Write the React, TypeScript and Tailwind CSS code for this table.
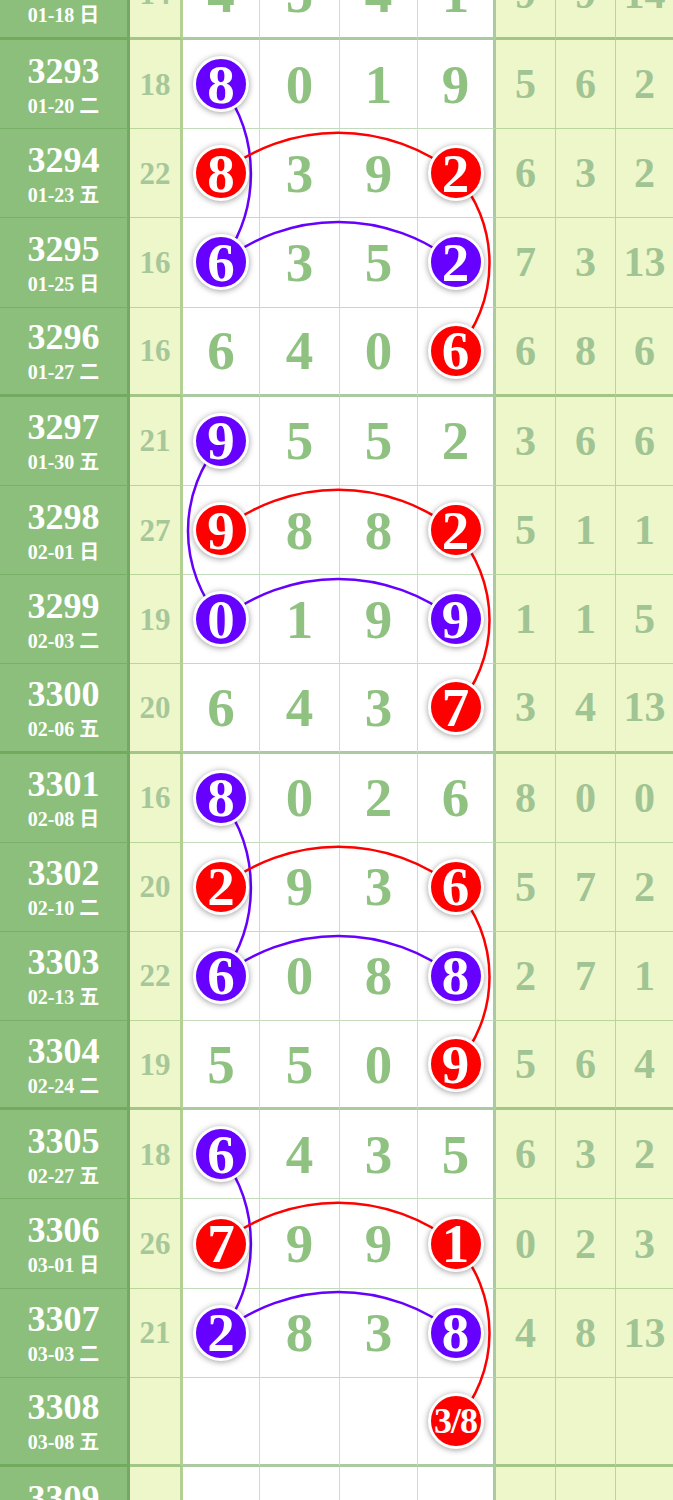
import React from "react";

type Row = { no: string; date: string; sum: string; nums: string[]; right: string[] };
type Mark = "P" | "R" | null;

const FONT = "font-['Liberation_Serif','Noto_Sans_CJK_SC',serif]";

const top: Row = { no: "3292", date: "01-18 日", sum: "14", nums: ["4", "5", "4", "1"], right: ["9", "9", "14"] };

const groups: Row[][] = [
  [
    { no: "3293", date: "01-20 二", sum: "18", nums: ["8", "0", "1", "9"], right: ["5", "6", "2"] },
    { no: "3294", date: "01-23 五", sum: "22", nums: ["8", "3", "9", "2"], right: ["6", "3", "2"] },
    { no: "3295", date: "01-25 日", sum: "16", nums: ["6", "3", "5", "2"], right: ["7", "3", "13"] },
    { no: "3296", date: "01-27 二", sum: "16", nums: ["6", "4", "0", "6"], right: ["6", "8", "6"] },
  ],
  [
    { no: "3297", date: "01-30 五", sum: "21", nums: ["9", "5", "5", "2"], right: ["3", "6", "6"] },
    { no: "3298", date: "02-01 日", sum: "27", nums: ["9", "8", "8", "2"], right: ["5", "1", "1"] },
    { no: "3299", date: "02-03 二", sum: "19", nums: ["0", "1", "9", "9"], right: ["1", "1", "5"] },
    { no: "3300", date: "02-06 五", sum: "20", nums: ["6", "4", "3", "7"], right: ["3", "4", "13"] },
  ],
  [
    { no: "3301", date: "02-08 日", sum: "16", nums: ["8", "0", "2", "6"], right: ["8", "0", "0"] },
    { no: "3302", date: "02-10 二", sum: "20", nums: ["2", "9", "3", "6"], right: ["5", "7", "2"] },
    { no: "3303", date: "02-13 五", sum: "22", nums: ["6", "0", "8", "8"], right: ["2", "7", "1"] },
    { no: "3304", date: "02-24 二", sum: "19", nums: ["5", "5", "0", "9"], right: ["5", "6", "4"] },
  ],
  [
    { no: "3305", date: "02-27 五", sum: "18", nums: ["6", "4", "3", "5"], right: ["6", "3", "2"] },
    { no: "3306", date: "03-01 日", sum: "26", nums: ["7", "9", "9", "1"], right: ["0", "2", "3"] },
    { no: "3307", date: "03-03 二", sum: "21", nums: ["2", "8", "3", "8"], right: ["4", "8", "13"] },
    { no: "3308", date: "03-08 五", sum: "", nums: ["", "", "", "3/8"], right: ["", "", ""] },
  ],
];

const bottom: Row = { no: "3309", date: "03-10 日", sum: "", nums: ["", "", "", ""], right: ["", "", ""] };

// which balls are marked, by position of the row inside its group
const marks: Mark[][] = [
  ["P", null, null, null],
  ["R", null, null, "R"],
  ["P", null, null, "P"],
  [null, null, null, "R"],
];

const numW = ["w-[77px]", "w-[80px]", "w-[78px]", "w-[78px]"];

const Ball = ({ v, c }: { v: string; c: "P" | "R" }) => (
  <div
    className={`relative z-10 flex h-[56px] w-[56px] items-center justify-center rounded-full border-[3px] border-white shadow-[0_1px_6px_rgba(0,0,0,0.4)] ${
      c === "P" ? "bg-[#6600ff]" : "bg-[#ff0000]"
    }`}
  >
    <span className={v.length > 1 ? "text-[36px] leading-none font-bold tracking-[-1px] text-white" : "text-[55px] leading-none font-bold text-white"}>
      {v}
    </span>
  </div>
);

const TableRow = ({ r, last, m }: { r: Row; last?: boolean; m?: Mark[] }) => {
  const bb = last ? "border-b-[3px] border-b-[#5a964680]" : "border-b border-b-[#5a964659]";
  return (
    <div className="flex h-[89.2px]">
      <div className={`flex w-[130px] shrink-0 flex-col items-center justify-center gap-[7px] border-r-[3px] border-r-[#74a864] bg-[#8bbf7b] text-white ${bb}`}>
        <span className="text-[36px] leading-none font-bold">{r.no}</span>
        <span className="text-[20px] leading-none font-bold">{r.date}</span>
      </div>
      <div className={`flex w-[53px] shrink-0 items-center justify-center border-r-[3px] border-r-[#5a964666] bg-[#eef7c9] text-[31px] leading-none font-bold text-[#a6c79a] ${bb}`}>
        {r.sum}
      </div>
      {r.nums.map((n, i) => (
        <div
          key={i}
          className={`flex shrink-0 items-center justify-center bg-white ${numW[i]} ${
            i === 3 ? "border-r-[3px] border-r-[#5a964680]" : "border-r border-r-[#5a96464d]"
          } ${bb}`}
        >
          {m && m[i] && n ? (
            <Ball v={n} c={m[i] as "P" | "R"} />
          ) : (
            <span className="text-[55px] leading-none font-bold text-[#8fc281]">{n}</span>
          )}
        </div>
      ))}
      {r.right.map((n, i) => (
        <div
          key={i}
          className={`flex items-center justify-center bg-[#eef7c9] text-[42px] leading-none font-bold text-[#a0c493] ${
            i === 2 ? "flex-1" : "w-[60px] shrink-0 border-r border-r-[#5a964659]"
          } ${bb}`}
        >
          {n}
        </div>
      ))}
    </div>
  );
};

const Curves = ({ left }: { left?: boolean }) => (
  <svg className="pointer-events-none absolute left-0 top-0" width={673} height={357} fill="none" strokeWidth={2.5}>
    <path d={left ? "M221 44.6 A137 137 0 0 0 221 223" : "M221 44.6 A148 148 0 0 1 221 223"} stroke="#6600ff" />
    <path d="M221 133.8 A188 188 0 0 1 455.5 133.8" stroke="#ff0000" />
    <path d="M221 223 A188 188 0 0 1 455.5 223" stroke="#6600ff" />
    <path d="M455.5 133.8 A134 134 0 0 1 455.5 312.2" stroke="#ff0000" />
  </svg>
);

export default function App() {
  return (
    <div className={`h-[1500px] w-[673px] overflow-hidden bg-white ${FONT}`}>
      <div className="mt-[-49.2px]">
        <TableRow r={top} last />
        {groups.map((g, gi) => (
          <div key={gi} className="relative">
            <Curves left={gi === 1} />
            {g.map((r, ri) => (
              <TableRow key={r.no} r={r} m={marks[ri]} last={ri === 3} />
            ))}
          </div>
        ))}
        <TableRow r={bottom} />
      </div>
    </div>
  );
}
